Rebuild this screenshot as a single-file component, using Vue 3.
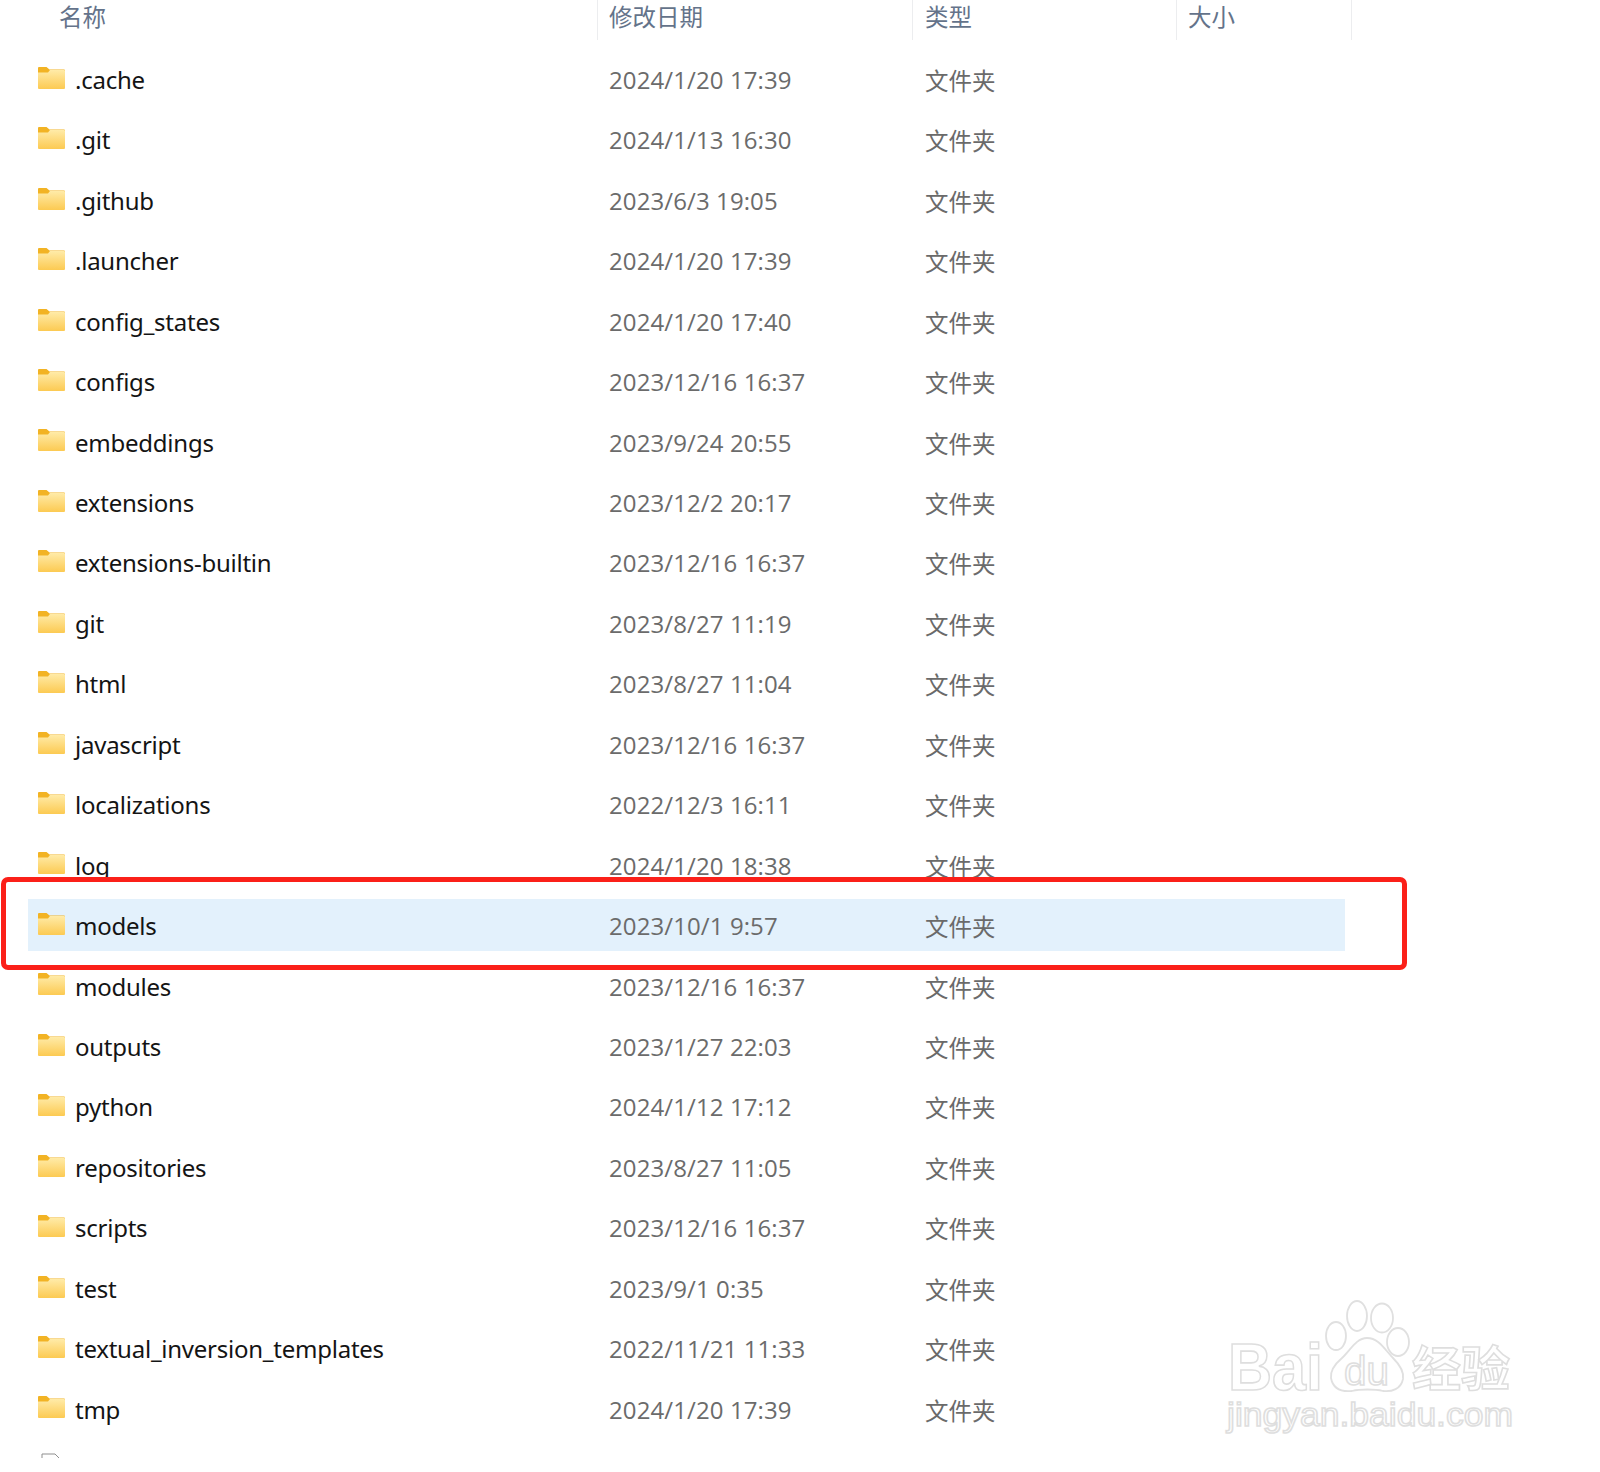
<script setup>
const rows = [
  ['.cache', '2024/1/20 17:39'], ['.git', '2024/1/13 16:30'], ['.github', '2023/6/3 19:05'],
  ['.launcher', '2024/1/20 17:39'], ['config_states', '2024/1/20 17:40'], ['configs', '2023/12/16 16:37'],
  ['embeddings', '2023/9/24 20:55'], ['extensions', '2023/12/2 20:17'], ['extensions-builtin', '2023/12/16 16:37'],
  ['git', '2023/8/27 11:19'], ['html', '2023/8/27 11:04'], ['javascript', '2023/12/16 16:37'],
  ['localizations', '2022/12/3 16:11'], ['log', '2024/1/20 18:38'], ['models', '2023/10/1 9:57'],
  ['modules', '2023/12/16 16:37'], ['outputs', '2023/1/27 22:03'], ['python', '2024/1/12 17:12'],
  ['repositories', '2023/8/27 11:05'], ['scripts', '2023/12/16 16:37'], ['test', '2023/9/1 0:35'],
  ['textual_inversion_templates', '2022/11/21 11:33'], ['tmp', '2024/1/20 17:39']
]
</script>

<template>
  <div class="page">
    <div class="head">
      <div class="hcell name">名称</div>
      <div class="hcell date">修改日期</div>
      <div class="hcell type">类型</div>
      <div class="hcell size">大小</div>
    </div>
    <div v-for="r in rows" :key="r[0]" class="row">
      <div class="cells" :class="{ active: r[0] === 'models' }">
        <div class="cname">
          <svg class="folder" width="27" height="22" viewBox="0 0 27 22">
            <defs>
              <linearGradient :id="'g' + r[0]" x1="0" y1="0" x2="0" y2="1">
                <stop offset="0" stop-color="#ffeba8" />
                <stop offset="1" stop-color="#fcca52" />
              </linearGradient>
            </defs>
            <path d="M1 0H8.5L11.5 2.5H26a1 1 0 0 1 1 1V8H0V1a1 1 0 0 1 1-1Z" fill="#f2b324" />
            <path d="M0 5.5H10L12 3H26a1 1 0 0 1 1 1V21a1 1 0 0 1-1 1H1a1 1 0 0 1-1-1Z" :fill="'url(#g' + r[0] + ')'" />
          </svg>
          <span class="fname">{{ r[0] }}</span>
        </div>
        <div class="cdate">{{ r[1] }}</div>
        <div class="ctype">文件夹</div>
      </div>
    </div>
    <div class="row">
      <div class="cells">
        <div class="cname">
          <div class="stub">
            <svg width="20" height="26" viewBox="0 0 20 26">
              <path d="M1 26V1H14L19 6V26" fill="#fff" stroke="#8f8f8f" stroke-width="1" />
            </svg>
          </div>
        </div>
      </div>
    </div>

    <div class="redbox"></div>

    <svg class="mark" width="320" height="150" viewBox="1220 1300 320 150">
      <g fill="#fff" stroke="#e0e0e0" stroke-width="1.8">
        <ellipse cx="1357" cy="1316" rx="10" ry="15" />
        <ellipse cx="1382" cy="1318" rx="11" ry="14.5" />
        <ellipse cx="1336" cy="1336" rx="10" ry="14" />
        <ellipse cx="1398" cy="1342" rx="11" ry="14" />
        <path d="M1367 1338C1379 1338 1385 1350 1393 1358C1402 1367 1404 1373 1403 1379C1401 1389 1392 1392 1383 1391C1375 1389 1360 1389 1352 1391C1342 1392 1333 1389 1331 1378C1330 1370 1335 1364 1342 1358C1350 1351 1356 1338 1367 1338Z" />
      </g>
      <g class="mark-text" fill="#fff" stroke="#dedede" stroke-width="1.6">
        <text class="big" x="1228" y="1390" textLength="95" lengthAdjust="spacingAndGlyphs">Bai</text>
        <text class="du" x="1344" y="1385" textLength="45" lengthAdjust="spacingAndGlyphs">du</text>
        <text class="cn" x="1412" y="1386" textLength="98" lengthAdjust="spacingAndGlyphs">经验</text>
        <text class="url" x="1227" y="1426" textLength="286" lengthAdjust="spacingAndGlyphs">jingyan.baidu.com</text>
      </g>
    </svg>
  </div>
</template>

<style>
html, body { margin: 0; background: #fff; }
</style>

<style scoped>
.page {
  position: relative;
  width: 1600px;
  height: 1472px;
  overflow: hidden;
  background: #fff;
  font-family: "Noto Sans", "Noto Sans CJK SC", sans-serif;
}
.head {
  display: grid;
  grid-template-columns: 598px 315px 264px 175px;
  width: 1352px;
  height: 49.8px;
  align-items: start;
}
.hcell {
  height: 40px;
  line-height: 33px;
  font-size: 23.5px;
  font-weight: 400;
  color: #64738a;
  box-sizing: border-box;
  border-right: 1px solid #ecedef;
  font-family: "Noto Sans CJK SC", sans-serif;
}
.hcell.name { padding-left: 59px; }
.hcell.date { padding-left: 11px; }
.hcell.type { padding-left: 12px; }
.hcell.size { padding-left: 11px; }
.row {
  height: 60.45px;
  box-sizing: border-box;
  padding-top: 3.5px;
}
.cells {
  display: grid;
  grid-template-columns: 570px 315px 264px 168px;
  width: 1317px;
  height: 52px;
  margin-left: 28px;
  align-items: center;
}
.cells.active { background: #e3f1fc; }
.cname {
  display: flex;
  align-items: center;
  padding-left: 10px;
  font-size: 24px;
  letter-spacing: -0.24px;
  color: #141414;
  line-height: 50px;
}
.fname { padding-top: 1.4px; }
.folder { margin-top: -3px; margin-right: 10px; flex: none; }
.stub {
  height: 5px;
  overflow: hidden;
  margin-left: 3px;
  margin-top: -28px;
}
.stub svg { display: block; }
.cdate {
  padding-top: 1.4px;
  padding-left: 11px;
  font-size: 24px;
  color: #6b6b6b;
  font-family: "Open Sans", sans-serif;
  letter-spacing: 0.1px;
  line-height: 50px;
}
.ctype {
  padding-top: 1.4px;
  padding-left: 12px;
  font-size: 23.5px;
  font-weight: 400;
  color: #6a6a6a;
  font-family: "Noto Sans CJK SC", sans-serif;
  line-height: 50px;
}
.redbox {
  position: absolute;
  left: 1px;
  top: 877px;
  width: 1406px;
  height: 93px;
  box-sizing: border-box;
  border: 5px solid #fb2019;
  border-radius: 7px;
}
.mark { position: absolute; left: 1220px; top: 1300px; }
.mark-text { font-family: "Liberation Sans", "Noto Sans CJK SC", sans-serif; }
.big { font-size: 66px; font-weight: 700; }
.du { font-size: 40px; }
.cn { font-size: 48px; font-weight: 700; font-family: "Noto Sans CJK SC", sans-serif; }
.url { font-size: 34px; }
</style>
